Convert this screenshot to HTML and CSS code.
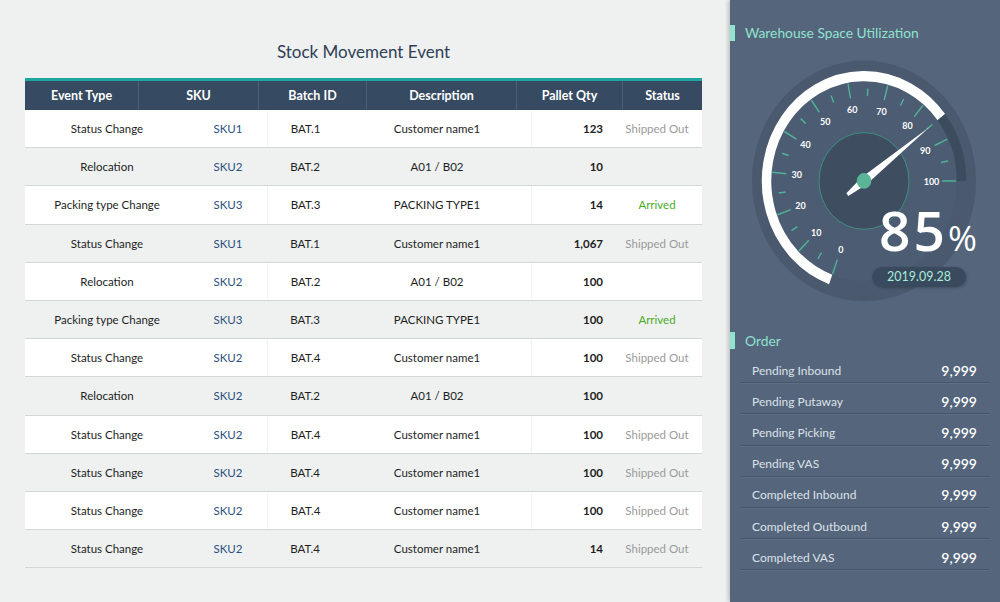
FILE: index.html
```html
<!DOCTYPE html>
<html>
<head>
<meta charset="utf-8">
<link rel="stylesheet" href="styles.css">
</head>
<body>
<div class="page">
  <section class="left">
    <h1 class="title">Stock Movement Event</h1>
    <div class="thead">
      <div>Event Type</div><div>SKU</div><div>Batch ID</div><div>Description</div><div>Pallet Qty</div><div>Status</div>
    </div>
    <div class="tbody">
      <div class="row odd"><div>Status Change</div><div class="sku">SKU1</div><div class="sep">BAT.1</div><div>Customer name1</div><div class="qty sep">123</div><div class="st out">Shipped Out</div></div>
      <div class="row"><div>Relocation</div><div class="sku">SKU2</div><div class="sep">BAT.2</div><div>A01 / B02</div><div class="qty sep">10</div><div class="st"></div></div>
      <div class="row odd"><div>Packing type Change</div><div class="sku">SKU3</div><div class="sep">BAT.3</div><div>PACKING TYPE1</div><div class="qty sep">14</div><div class="st arr">Arrived</div></div>
      <div class="row"><div>Status Change</div><div class="sku">SKU1</div><div class="sep">BAT.1</div><div>Customer name1</div><div class="qty sep">1,067</div><div class="st out">Shipped Out</div></div>
      <div class="row odd"><div>Relocation</div><div class="sku">SKU2</div><div class="sep">BAT.2</div><div>A01 / B02</div><div class="qty sep">100</div><div class="st"></div></div>
      <div class="row"><div>Packing type Change</div><div class="sku">SKU3</div><div class="sep">BAT.3</div><div>PACKING TYPE1</div><div class="qty sep">100</div><div class="st arr">Arrived</div></div>
      <div class="row odd"><div>Status Change</div><div class="sku">SKU2</div><div class="sep">BAT.4</div><div>Customer name1</div><div class="qty sep">100</div><div class="st out">Shipped Out</div></div>
      <div class="row"><div>Relocation</div><div class="sku">SKU2</div><div class="sep">BAT.2</div><div>A01 / B02</div><div class="qty sep">100</div><div class="st"></div></div>
      <div class="row odd"><div>Status Change</div><div class="sku">SKU2</div><div class="sep">BAT.4</div><div>Customer name1</div><div class="qty sep">100</div><div class="st out">Shipped Out</div></div>
      <div class="row"><div>Status Change</div><div class="sku">SKU2</div><div class="sep">BAT.4</div><div>Customer name1</div><div class="qty sep">100</div><div class="st out">Shipped Out</div></div>
      <div class="row odd"><div>Status Change</div><div class="sku">SKU2</div><div class="sep">BAT.4</div><div>Customer name1</div><div class="qty sep">100</div><div class="st out">Shipped Out</div></div>
      <div class="row"><div>Status Change</div><div class="sku">SKU2</div><div class="sep">BAT.4</div><div>Customer name1</div><div class="qty sep">14</div><div class="st out">Shipped Out</div></div>
    </div>
  </section>
  <aside class="right">
    <h2 class="head">Warehouse Space Utilization</h2>
    <div class="gauge">
      <svg class="gauge-svg" width="240" height="250" viewBox="0 0 240 232.6" preserveAspectRatio="none">
        <circle cx="120" cy="117.2" r="112" fill="#4a596e"/>
        <circle cx="120" cy="117.2" r="93" fill="#4c5c72"/>
        <circle cx="120" cy="117.2" r="45" fill="#3f4d61" stroke="#3f9484" stroke-width="0.9"/>
        <path d="M86.65,208.82 A97.5,97.5 0 1 1 197.36,57.84" fill="none" stroke="#ffffff" stroke-width="9.5"/>
        <path d="M197.36,57.84 A97.5,97.5 0 0 1 217.5,117.2" fill="none" stroke="#3d4b5f" stroke-width="9.5"/>
        <g transform="translate(120,117.2)" stroke="#4fb397" stroke-width="1.4">
          <line x1="78" x2="92" transform="rotate(110)"/>
          <line x1="78" x2="92" transform="rotate(135)"/>
          <line x1="78" x2="92" transform="rotate(160)"/>
          <line x1="78" x2="92" transform="rotate(185)"/>
          <line x1="78" x2="92" transform="rotate(210)"/>
          <line x1="78" x2="92" transform="rotate(235)"/>
          <line x1="78" x2="92" transform="rotate(260)"/>
          <line x1="78" x2="92" transform="rotate(285)"/>
          <line x1="78" x2="92" transform="rotate(310)"/>
          <line x1="78" x2="92" transform="rotate(335)"/>
          <line x1="78" x2="92" transform="rotate(360)"/>
          <line x1="79" x2="86" transform="rotate(122.5)"/>
          <line x1="79" x2="86" transform="rotate(147.5)"/>
          <line x1="79" x2="86" transform="rotate(172.5)"/>
          <line x1="79" x2="86" transform="rotate(197.5)"/>
          <line x1="79" x2="86" transform="rotate(222.5)"/>
          <line x1="79" x2="86" transform="rotate(247.5)"/>
          <line x1="79" x2="86" transform="rotate(272.5)"/>
          <line x1="79" x2="86" transform="rotate(297.5)"/>
          <line x1="79" x2="86" transform="rotate(322.5)"/>
          <line x1="79" x2="86" transform="rotate(347.5)"/>
        </g>
        <g class="labels" fill="#ffffff" text-anchor="middle" dominant-baseline="central">
          <text x="96.9" y="180.6">0</text>
          <text x="72.3" y="164.9">10</text>
          <text x="56.6" y="140.3">20</text>
          <text x="52.8" y="111.3">30</text>
          <text x="61.5" y="83.5">40</text>
          <text x="81.3" y="61.9">50</text>
          <text x="108.3" y="50.7">60</text>
          <text x="137.5" y="52.0">70</text>
          <text x="163.4" y="65.5">80</text>
          <text x="181.2" y="88.7">90</text>
          <text x="187.5" y="117.2">100</text>
        </g>
        <g transform="translate(120,117.2)">
          <polygon points="83,0 0,-4 -21,-1.6 -21,1.6 0,4" fill="#ffffff" transform="rotate(322.5)"/>
          <circle r="7.3" fill="#5ab598"/>
        </g>
      </svg>
      <div class="pct"><span class="num">85</span><span class="sign">%</span></div>
      <div class="date">2019.09.28</div>
    </div>
    <h2 class="head order-head">Order</h2>
    <ul class="orders">
      <li><span>Pending Inbound</span><b>9,999</b></li>
      <li><span>Pending Putaway</span><b>9,999</b></li>
      <li><span>Pending Picking</span><b>9,999</b></li>
      <li><span>Pending VAS</span><b>9,999</b></li>
      <li><span>Completed Inbound</span><b>9,999</b></li>
      <li><span>Completed Outbound</span><b>9,999</b></li>
      <li><span>Completed VAS</span><b>9,999</b></li>
    </ul>
  </aside>
</div>
</body>
</html>
```

FILE: styles.css
```css
html, body {
  margin: 0;
  padding: 0;
  width: 1000px;
  height: 602px;
  overflow: hidden;
  font-family: Lato, "Noto Sans", sans-serif;
}

.page {
  display: flex;
  width: 1000px;
  height: 602px;
}

.left {
  width: 730px;
  box-sizing: border-box;
  padding: 40px 28px 0 25px;
  background: #eef1f0;
}

.title {
  margin: 0 0 14px;
  height: 24px;
  line-height: 24px;
  text-align: center;
  font-size: 17px;
  font-weight: 400;
  color: #2f4057;
}

.thead {
  display: grid;
  grid-template-columns: 113px 120px 108px 150px 106px 80px;
  height: 32px;
  box-sizing: border-box;
  border-top: 3px solid #1fa69e;
  background: #364a62;
}

.thead div {
  display: flex;
  align-items: center;
  justify-content: center;
  color: #ffffff;
  font-size: 12.5px;
  font-weight: 700;
}

.thead div + div {
  border-left: 1px solid #4b5e76;
}

.row {
  display: grid;
  grid-template-columns: 164px 78px 76px 188px 81px 90px;
  height: 38.2px;
  box-sizing: border-box;
  border-bottom: 1px solid #d3d7d7;
  font-size: 11.5px;
  color: #1e1e1e;
}

.row.odd {
  background: #ffffff;
}

.row div {
  display: flex;
  align-items: center;
  justify-content: center;
}

.row.odd .sep {
  border-left: 1px solid #f3f5f5;
}

.row .sku {
  color: #2a4f7e;
}

.row .qty {
  justify-content: flex-end;
  padding-right: 9px;
  font-weight: 700;
}

.row .st.out {
  color: #9a9a9a;
}

.row .st.arr {
  color: #4aab1f;
}

.right {
  position: relative;
  width: 270px;
  background: #54657c;
  box-shadow: -2px 0 4px rgba(0, 0, 0, 0.2);
  padding-top: 25px;
  box-sizing: border-box;
}

.head {
  margin: 0;
  height: 16px;
  line-height: 16px;
  border-left: 5px solid #8fe3cf;
  padding-left: 10px;
  font-size: 13.8px;
  font-weight: 400;
  color: #8fe3cf;
}

.gauge {
  position: relative;
  margin: 14px 0 0 14px;
  width: 240px;
  height: 250px;
}

.gauge-svg {
  display: block;
}

.labels {
  font-family: Lato, "Noto Sans", sans-serif;
  font-size: 9px;
  font-weight: 700;
}

.pct {
  position: absolute;
  left: 135px;
  top: 147px;
  display: flex;
  align-items: baseline;
  color: #ffffff;
  font-family: "Open Sans", sans-serif;
  line-height: 1;
}

.pct .num {
  font-size: 55px;
  font-weight: 600;
  letter-spacing: 3px;
}

.pct .sign {
  font-size: 35px;
  font-weight: 400;
}

.date {
  position: absolute;
  left: 128px;
  top: 212px;
  width: 94px;
  height: 20px;
  line-height: 20px;
  border-radius: 10px;
  background: #3a4a5e;
  box-shadow: 1px 1px 3px rgba(0, 0, 0, 0.2);
  color: #a6ebda;
  font-size: 12.5px;
  text-align: center;
}

.order-head {
  margin-top: 27px;
  height: 17px;
  line-height: 17px;
}

.orders {
  list-style: none;
  margin: 3px 10px 0 11px;
  padding: 0;
}

.orders li {
  display: flex;
  justify-content: space-between;
  align-items: center;
  height: 31.2px;
  box-sizing: border-box;
  padding: 6px 13px 0 11px;
  border-bottom: 1px solid #45556a;
  box-shadow: 0 1px 0 rgba(255, 255, 255, 0.06);
}

.orders span {
  color: #dde2e8;
  font-size: 12px;
}

.orders b {
  color: #ffffff;
  font-size: 14px;
  font-weight: 600;
}
```
